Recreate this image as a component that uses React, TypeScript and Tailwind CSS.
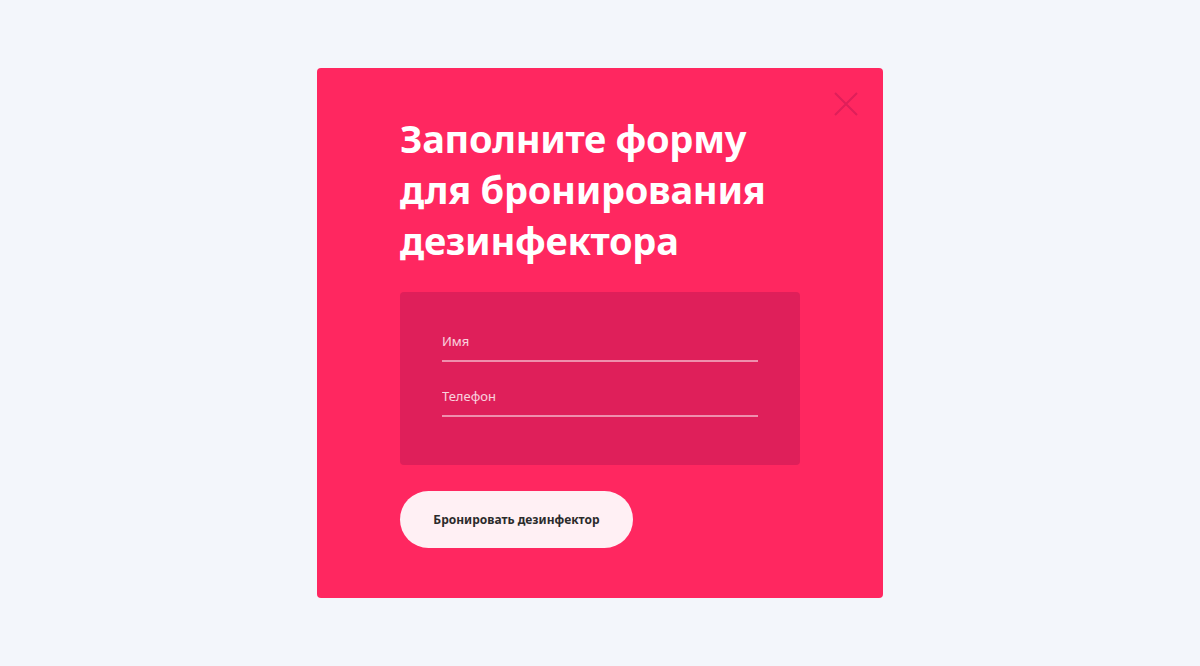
import { useState } from 'react';

export default function App() {
  const [name, setName] = useState('');
  const [phone, setPhone] = useState('');

  return (
    <div
      className="flex min-h-[666px] w-full items-start justify-center bg-[#f3f6fb] pt-[68px]"
      style={{ fontFamily: '"Noto Sans", "Open Sans", sans-serif' }}
    >
      <div className="relative h-[530px] w-[566px] rounded-[4px] bg-[#ff2760] pl-[83px] pt-[45px]">
        <button className="absolute right-[25px] top-[24px] h-[24px] w-[24px] text-[#df1f5a]">
          <svg viewBox="0 0 24 24" className="h-full w-full" fill="none" stroke="currentColor" strokeWidth="2">
            <path d="M1 1L23 23M23 1L1 23" />
          </svg>
        </button>

        <h1 className="text-[38px] font-bold leading-[51px] tracking-[-0.3px] text-white">
          Заполните форму
          <br />
          для бронирования
          <br />
          дезинфектора
        </h1>

        <div className="mt-[26px] flex h-[173px] w-[400px] flex-col gap-[18px] rounded-[4px] bg-[#df1f5a] px-[42px] pt-[33px]">
          <input
            value={name}
            onChange={(e) => setName(e.target.value)}
            placeholder="Имя"
            className="h-[37px] w-full border-b-2 border-white/50 bg-transparent pb-[4px] text-[13px] text-white outline-none placeholder:text-white/80"
          />
          <input
            value={phone}
            onChange={(e) => setPhone(e.target.value)}
            placeholder="Телефон"
            className="h-[37px] w-full border-b-2 border-white/50 bg-transparent pb-[4px] text-[13px] text-white outline-none placeholder:text-white/80"
          />
        </div>

        <button className="mt-[26px] flex h-[57px] w-[233px] items-center justify-center rounded-full bg-[#fff0f4] text-[12px] font-bold text-[#2b2b2b]">
          Бронировать дезинфектор
        </button>
      </div>
    </div>
  );
}
